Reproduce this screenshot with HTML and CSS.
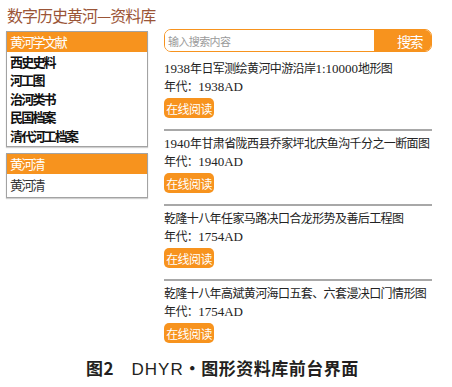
FILE: index.html
```html
<!DOCTYPE html>
<html>
<head>
<meta charset="utf-8" />
<link rel="stylesheet" href="styles.css">
<title>数字历史黄河—资料库</title>
</head>
<body>

<h1 class="siteTitle">数字历史黄河—资料库</h1>

<div class="main">

<div class="sideCol">
  <div class="panel">
    <div class="panelHead">黄河学文献</div>
    <ul class="panelList bold">
      <li>西史史料</li>
      <li>河工图</li>
      <li>治河类书</li>
      <li>民国档案</li>
      <li>清代河工档案</li>
    </ul>
  </div>

  <div class="panel">
    <div class="panelHead">黄河清</div>
    <ul class="panelList short">
      <li>黄河清</li>
    </ul>
  </div>
</div>

<div class="contentCol">
  <div class="search">
    <input type="text" class="searchInput" placeholder="输入搜索内容">
    <button type="button" class="searchBtn">搜索</button>
  </div>

  <div class="item">
    <div class="itemTitle"><span class="num">1938</span>年日军测绘黄河中游沿岸<span class="num">1:10000</span>地形图</div>
    <div class="itemYear">年代：<span class="num">1938AD</span></div>
    <button type="button" class="readBtn">在线阅读</button>
  </div>

  <div class="item">
    <div class="itemTitle"><span class="num">1940</span>年甘肃省陇西县乔家坪北庆鱼沟千分之一断面图</div>
    <div class="itemYear">年代：<span class="num">1940AD</span></div>
    <button type="button" class="readBtn">在线阅读</button>
  </div>

  <div class="item">
    <div class="itemTitle">乾隆十八年任家马路决口合龙形势及善后工程图</div>
    <div class="itemYear">年代：<span class="num">1754AD</span></div>
    <button type="button" class="readBtn">在线阅读</button>
  </div>

  <div class="item last">
    <div class="itemTitle">乾隆十八年高斌黄河海口五套、六套漫决口门情形图</div>
    <div class="itemYear">年代：<span class="num">1754AD</span></div>
    <button type="button" class="readBtn">在线阅读</button>
  </div>
</div>

</div>

<p class="caption">图2　<span class="capLatin">DHYR</span>·图形资料库前台界面</p>

</body>
</html>
```

FILE: styles.css
```css
body
{
	margin: 0;
	background-color: white;
	font-family: "Liberation Serif", "Noto Sans CJK SC", serif;
	color: #222;
}

h1.siteTitle
{
	margin: 5px 0 0 7px;
	font-family: "Noto Sans CJK SC", sans-serif;
	font-size: 16px;
	font-weight: normal;
	line-height: 20px;
	letter-spacing: -1px;
	color: #9b5537;
}

.main
{
	display: flex;
	align-items: flex-start;
	gap: 16px;
	margin-top: 4px;
}

.sideCol
{
	width: 142px;
	margin-left: 6px;
	margin-top: 2px;
	display: flex;
	flex-direction: column;
	gap: 6px;
}

.panel
{
	border: 1px solid #a3a3a3;
	box-shadow: 0 1px 1px #d0d0d0;
}

.panelHead
{
	background-color: #f7931e;
	color: white;
	height: 20px;
	line-height: 20px;
	padding-left: 3px;
	font-family: "Noto Sans CJK SC", sans-serif;
	font-size: 13px;
	letter-spacing: -1.8px;
}

.panelList
{
	list-style: none;
	margin: 0;
	padding: 1px 0 1px 3px;
	font-family: "Noto Sans CJK SC", sans-serif;
	font-size: 13px;
	line-height: 18.4px;
	letter-spacing: -1.8px;
	color: #333;
}

.panelList.bold
{
	font-weight: bold;
	color: #111;
}

.panelList.short
{
	padding: 2px 0 3px 3px;
}

.contentCol
{
	width: 268px;
}

.search
{
	display: flex;
	height: 23px;
	border: 1px solid #f7931e;
	border-radius: 7px;
	overflow: hidden;
	box-sizing: border-box;
	margin-bottom: 4px;
}

.searchInput
{
	flex: 1;
	border: none;
	outline: none;
	padding: 0 3px;
	font-family: "Noto Sans CJK SC", sans-serif;
	font-size: 11px;
	letter-spacing: -0.6px;
	color: #333;
}

.searchInput::placeholder
{
	color: #9a9a9a;
}

.searchBtn
{
	width: 57px;
	border: none;
	background-color: #f7931e;
	color: white;
	padding: 0 0 0 14px;
	font-family: "Noto Sans CJK SC", sans-serif;
	font-size: 14px;
	letter-spacing: -1.6px;
}

.item
{
	padding: 4px 0 11px 0;
	border-bottom: 2px solid #a8a8a8;
}

.item.last
{
	border-bottom: none;
}

.itemTitle, .itemYear
{
	font-size: 12px;
	line-height: 18px;
	letter-spacing: -0.6px;
	white-space: nowrap;
	color: #222;
}

.num
{
	font-size: 13px;
	letter-spacing: 0;
}

.readBtn
{
	display: block;
	margin-top: 2px;
	height: 20px;
	width: 50px;
	padding: 0;
	border: none;
	border-radius: 5px;
	background-color: #f7931e;
	color: white;
	font-family: "Noto Sans CJK SC", sans-serif;
	font-size: 12px;
	letter-spacing: -0.6px;
}

p.caption
{
	margin: 2px 0 0 86px;
	font-family: "Noto Sans CJK SC", sans-serif;
	font-size: 17px;
	font-weight: bold;
	line-height: 24px;
	letter-spacing: 0.5px;
	color: #231f20;
}

.capLatin
{
	font-family: "Liberation Sans", sans-serif;
	font-weight: normal;
	letter-spacing: 1px;
}
```
